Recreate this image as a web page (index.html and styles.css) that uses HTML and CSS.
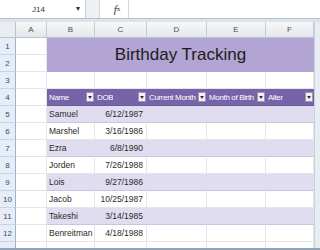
FILE: index.html
```html
<!DOCTYPE html>
<html>
<head>
<meta charset="utf-8">
<link rel="stylesheet" href="styles.css">
</head>
<body>
<div class="app">
  <div class="fbar">
    <div class="namebox"><span class="ref">J14</span><span class="nb-arrow">▾</span></div>
    <div class="grip"></div>
    <div class="fx"><i>f</i><sub>x</sub></div>
    <div class="finput"></div>
  </div>
  <div class="sheet">
    <div class="corner"></div>
    <div class="ch">A</div><div class="ch">B</div><div class="ch">C</div><div class="ch">D</div><div class="ch">E</div><div class="ch">F</div>
    <div class="vscroll"></div>

    <div class="rh r1">1</div><div class="c r1 a"></div>
    <div class="title">Birthday Tracking</div>
    <div class="rh r2">2</div><div class="c r2 a"></div>

    <div class="rh">3</div><div class="c"></div><div class="c"></div><div class="c"></div><div class="c"></div><div class="c"></div><div class="c"></div>

    <div class="rh">4</div><div class="c"></div>
    <div class="hd"><span class="ht">Name</span><span class="flt"></span></div>
    <div class="hd"><span class="ht">DOB</span><span class="flt"></span></div>
    <div class="hd"><span class="ht">Current Month</span><span class="flt"></span></div>
    <div class="hd"><span class="ht">Month of Birth</span><span class="flt"></span></div>
    <div class="hd"><span class="ht">Alter</span><span class="flt"></span></div>

    <div class="rh">5</div><div class="c"></div><div class="c band">Samuel</div><div class="c band num">6/12/1987</div><div class="c band"></div><div class="c band"></div><div class="c band"></div>
    <div class="rh">6</div><div class="c"></div><div class="c">Marshel</div><div class="c num">3/16/1986</div><div class="c"></div><div class="c"></div><div class="c"></div>
    <div class="rh">7</div><div class="c"></div><div class="c band">Ezra</div><div class="c band num">6/8/1990</div><div class="c band"></div><div class="c band"></div><div class="c band"></div>
    <div class="rh">8</div><div class="c"></div><div class="c">Jorden</div><div class="c num">7/26/1988</div><div class="c"></div><div class="c"></div><div class="c"></div>
    <div class="rh">9</div><div class="c"></div><div class="c band">Lois</div><div class="c band num">9/27/1986</div><div class="c band"></div><div class="c band"></div><div class="c band"></div>
    <div class="rh">10</div><div class="c"></div><div class="c">Jacob</div><div class="c num">10/25/1987</div><div class="c"></div><div class="c"></div><div class="c"></div>
    <div class="rh">11</div><div class="c"></div><div class="c band">Takeshi</div><div class="c band num">3/14/1985</div><div class="c band"></div><div class="c band"></div><div class="c band"></div>
    <div class="rh">12</div><div class="c"></div><div class="c">Benreitman</div><div class="c num">4/18/1988</div><div class="c"></div><div class="c"></div><div class="c"></div>
    <div class="rh">13</div><div class="c"></div><div class="c"></div><div class="c"></div><div class="c"></div><div class="c"></div><div class="c"></div>
  </div>
</div>
</body>
</html>
```
FILE: styles.css
```css
* { box-sizing: border-box; }
html, body { margin: 0; padding: 0; }
body {
  width: 320px; height: 250px; overflow: hidden;
  background: #fff;
  font-family: "Liberation Sans", Arial, sans-serif;
  font-size: 8.5px; color: #222;
}
.app { width: 320px; height: 250px; display: flex; flex-direction: column; background: #dde3ea; border-bottom: 2px solid #8ea2b8; }
.fbar {
  height: 19px; display: flex; align-items: stretch;
  background: #fff; border-bottom: 1px solid #b9c2cc;
  flex: none;
}
.namebox {
  width: 86px; display: flex; align-items: center; justify-content: center; position: relative;
  border-right: 1px solid #c9ced5; color: #333; font-size: 8px; padding-right: 8px;
}
.nb-arrow { position: absolute; right: 5px; top: 4px; font-size: 8px; color: #333; }
.grip { width: 14px; background: #eef0f3; border-right: 1px solid #d3d7dc; }
.fx { width: 28px; display: flex; align-items: center; justify-content: center; padding-left: 6px; font-family: "Liberation Serif", serif; font-size: 11px; color: #333; }
.fx sub { font-size: 7px; vertical-align: -1px; }
.finput { flex: 1; border-left: 1px solid #d3d7dc; background: #fff; }
.sheet {
  margin-top: 3px;
  display: grid;
  grid-template-columns: 16px 31px 48px 52px 60px 59px 48px 6px;
  grid-template-rows: 16px repeat(13, 17px);
  background: #fff;
  flex: none;
  overflow: hidden;
  height: 226px;
}
.corner { background: #e9ecf0; border-right: 1px solid #b8c4d2; border-bottom: 1px solid #b8c4d2; }
.ch {
  background: linear-gradient(#f6f7f8, #e4e7ea);
  border-right: 1px solid #c5cbd3; border-bottom: 1px solid #b8c4d2;
  display: flex; align-items: center; justify-content: center;
  color: #4a4f57; font-size: 8px;
}
.vscroll { grid-column: 8; grid-row: 1 / span 14; background: #e8edf3; border-left: 1px solid #c7d0da; }
.rh {
  grid-column: 1;
  background: #e6edf6; border-right: 1px solid #9fb3c8; border-bottom: 1px solid #c8d4e2;
  display: flex; align-items: center; justify-content: center;
  color: #3d4b5c; font-size: 8px;
}
.c {
  border-right: 1px solid #e3e6eb; border-bottom: 1px solid #e3e6eb;
  display: flex; align-items: center; padding: 0 3px 0 2px; white-space: nowrap; overflow: hidden;
  color: #2a2a2a;
}
.c.a { grid-column: 2; }
.r1 { grid-row: 2; }
.r2 { grid-row: 3; }
.title {
  grid-column: 3 / span 5; grid-row: 2 / span 2;
  background: #b2a5d3;
  display: flex; align-items: center; justify-content: center;
  font-size: 17px; color: #1c1c1c; padding-bottom: 1px;
}
.band { background: #e1ddf0; border-bottom-color: #c9c4df; border-right-color: #e1ddf0; }
.num { justify-content: flex-end; }
.hd {
  background: #7663a8; color: #fff;
  display: flex; align-items: center; justify-content: space-between; gap: 1px;
  padding: 0 1px 0 2px; white-space: nowrap; overflow: hidden;
  border-bottom: 1px solid #6a5a9a;
  font-size: 8px; letter-spacing: -0.35px;
}
.ht { overflow: hidden; }
.flt {
  width: 8px; height: 10px; background: #f3f3f6; border: 1px solid #9c93b8; flex: none; position: relative;
}
.flt::after {
  content: ""; position: absolute; left: 1px; top: 3px;
  border-left: 2.5px solid transparent; border-right: 2.5px solid transparent; border-top: 3px solid #333;
}
```
